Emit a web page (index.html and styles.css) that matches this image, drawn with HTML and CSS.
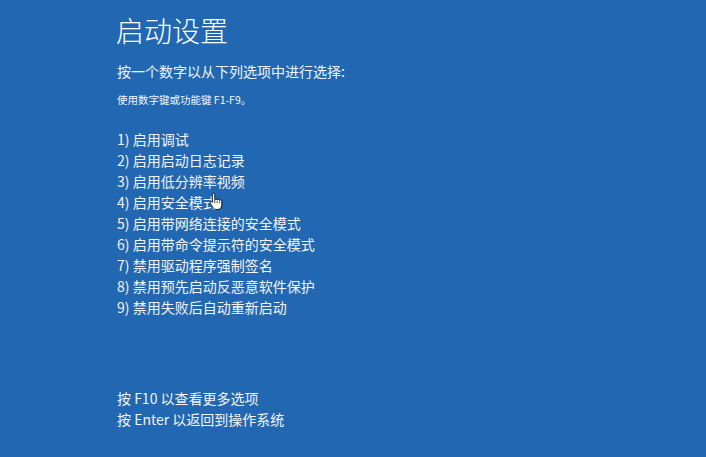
FILE: index.html
```html
<!DOCTYPE html>
<html lang="zh-CN">
<head>
<meta charset="utf-8">
<link rel="stylesheet" href="styles.css">
</head>
<body>
<main class="screen">
  <h1 class="title">启动设置</h1>
  <p class="prompt">按一个数字以从下列选项中进行选择:</p>
  <p class="hint">使用数字键或功能键 F1-F9。</p>
  <ol class="options">
    <li>1) 启用调试</li>
    <li>2) 启用启动日志记录</li>
    <li>3) 启用低分辨率视频</li>
    <li>4) 启用安全模式</li>
    <li>5) 启用带网络连接的安全模式</li>
    <li>6) 启用带命令提示符的安全模式</li>
    <li>7) 禁用驱动程序强制签名</li>
    <li>8) 禁用预先启动反恶意软件保护</li>
    <li>9) 禁用失败后自动重新启动</li>
  </ol>
  <div class="footer">
    <p>按 F10 以查看更多选项</p>
    <p>按 Enter 以返回到操作系统</p>
  </div>
  <svg class="cursor" width="14" height="19" viewBox="0 0 14 19">
    <path d="M4.5 1.2c.8 0 1.3.6 1.3 1.3v5.3c.2-.6.7-.9 1.2-.9.7 0 1.2.5 1.2 1.1.2-.5.7-.8 1.2-.8.7 0 1.2.5 1.2 1.2.2-.3.6-.5 1-.5.7 0 1.2.6 1.2 1.3v4.1c0 2.4-1.7 4.2-4.1 4.2H7.1c-1.3 0-2.2-.6-2.9-1.6L1.3 11.4c-.4-.6-.2-1.3.3-1.6.5-.3 1.2-.2 1.6.3l.1.2V2.5c0-.7.5-1.3 1.2-1.3z" fill="#fff" stroke="#000" stroke-width="0.9" stroke-linejoin="round"/>
    <path d="M5.8 8v3.2M8.2 8.6v2.6M10.6 9.4v1.8" stroke="#000" stroke-width="0.7" fill="none"/>
  </svg>
</main>
</body>
</html>
```
FILE: styles.css
```css
html, body {
  margin: 0;
  padding: 0;
  background: #2267b1;
}
.screen {
  position: relative;
  width: 706px;
  height: 457px;
  box-sizing: border-box;
  padding: 12px 0 0 116px;
  color: #f2f5fa;
  font-family: "Noto Sans CJK SC", "Noto Sans", sans-serif;
  overflow: hidden;
}
.title {
  margin: 0;
  font-size: 28px;
  line-height: 36px;
  font-weight: 300;
  color: #ffffff;
}
.prompt {
  margin: 13px 0 0 1px;
  font-size: 14px;
  line-height: 20px;
}
.hint {
  margin: 11px 0 0 1px;
  font-size: 10.5px;
  line-height: 16px;
}
.options {
  list-style: none;
  margin: 21px 0 0 1px;
  padding: 0;
  font-size: 14px;
  line-height: 21px;
}
.footer {
  margin: 70px 0 0 1px;
  font-size: 14px;
  line-height: 21px;
}
.footer p {
  margin: 0;
}
.cursor {
  position: absolute;
  left: 209px;
  top: 192px;
}
```
